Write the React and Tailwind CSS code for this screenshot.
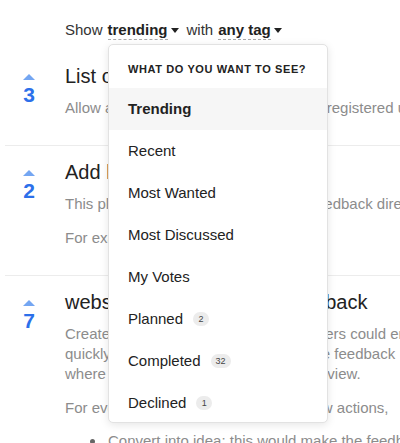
import React from 'react';

const font = { fontFamily: '"Liberation Sans", Arial, sans-serif' };

const options = [
  { label: 'Trending', active: true },
  { label: 'Recent' },
  { label: 'Most Wanted' },
  { label: 'Most Discussed' },
  { label: 'My Votes' },
  { label: 'Planned', count: 2 },
  { label: 'Completed', count: 32 },
  { label: 'Declined', count: 1 },
];

const Caret = () => (
  <svg width="8" height="5" viewBox="0 0 8 5" className="ml-[3px] mt-[1px]">
    <path d="M0 0h8L4 5z" fill="#222" />
  </svg>
);

const Filter = ({ children }) => (
  <span className="inline-flex items-center">
    <span className="font-bold text-[#222] border-b border-dashed border-[#aaa] leading-[19px]">
      {children}
    </span>
    <Caret />
  </span>
);

const Vote = ({ count }) => (
  <div className="w-[58px] flex flex-col items-center pt-[10px] shrink-0">
    <svg width="12" height="6" viewBox="0 0 12 6">
      <path d="M0 6L6 0l6 6z" fill="#74a6f2" />
    </svg>
    <div className="mt-[3px] text-[21px] leading-[24px] font-bold text-[#2c70ea]">{count}</div>
  </div>
);

const Post = ({ count, title, children, first }) => (
  <div className={first ? 'flex pt-[14px] pb-[27px]' : 'flex pt-[14px] pb-[27px] border-t border-[#ececec] ml-[5px] -mr-[40px]'}>
    <div className={first ? '' : '-ml-[5px]'}>
      <Vote count={count} />
    </div>
    <div className="pl-[7px] whitespace-nowrap">
      <div className="text-[20px] leading-[24px] text-[#222]">{title}</div>
      <div className="mt-[10px] text-[15px] leading-[20px] text-[#8c8c8c]">{children}</div>
    </div>
  </div>
);

export default function App() {
  return (
    <div className="relative w-[400px] h-[443px] overflow-hidden bg-white" style={font}>
      <div className="h-[50px] pl-[65px] pt-[20px] flex items-start text-[15px] text-[#333] leading-[19px]">
        <span className="mr-[5px]">Show</span>
        <Filter>trending</Filter>
        <span className="ml-[8px] mr-[5px]">with</span>
        <Filter>any tag</Filter>
      </div>

      <Post count={3} title="List of feature requests" first>
        <p>Allow all anonymous visitors as well as registered users</p>
      </Post>

      <Post count={2} title="Add live chat support">
        <p className="mb-[14px]">This plugin lets website visitors send feedback directly</p>
        <p>For example from the help menu</p>
      </Post>

      <Post count={7} title="website widget to gather feedback">
        <p>
          Create a small widget that website owners could embed
          <br />
          quickly on their page so visitors give the feedback
          <br />
          where the staff can easily collect and review.
        </p>
        <p className="mt-[14px]">For every piece of feedback, allow a few actions,</p>
        <ul className="mt-[13px] pl-[25px]">
          <li className="flex items-center">
            <span className="w-[5px] h-[5px] rounded-full bg-[#666] mr-[13px]" />
            Convert into idea: this would make the feedback public
          </li>
        </ul>
      </Post>

      <div className="absolute left-[108px] top-[44px] w-[220px] h-[379px] bg-white border border-[#e2e2e2] rounded-[5px] shadow-[0_2px_8px_rgba(0,0,0,0.10)]">
        <div className="h-[43px] pl-[19px] pt-[18px] text-[11px] leading-[13px] font-bold tracking-[0.6px] text-[#222]">
          WHAT DO YOU WANT TO SEE?
        </div>
        {options.map((o) => (
          <div
            key={o.label}
            className={
              o.active
                ? 'h-[42px] pl-[19px] flex items-center bg-[#f6f6f6] text-[15px] font-bold text-[#222]'
                : 'h-[42px] pl-[19px] flex items-center text-[15px] text-[#222]'
            }
          >
            {o.label}
            {o.count != null && (
              <span className="ml-[10px] h-[14px] min-w-[16px] px-[5px] rounded-full bg-[#ececec] text-[9px] leading-[14px] text-[#444] text-center">
                {o.count}
              </span>
            )}
          </div>
        ))}
      </div>
    </div>
  );
}
